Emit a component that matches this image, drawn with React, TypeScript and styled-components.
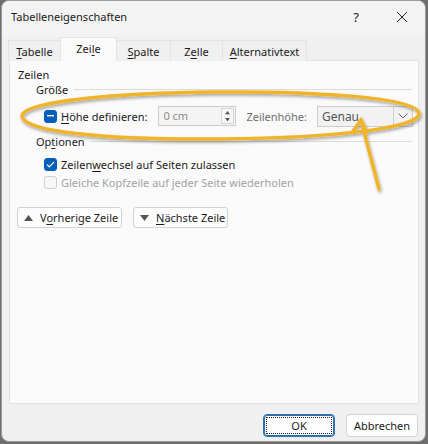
import React from 'react';
import styled, { createGlobalStyle } from 'styled-components';

const GlobalStyle = createGlobalStyle`
  html, body {
    margin: 0;
    padding: 0;
    background: #6e6e6e;
  }
  body {
    font-family: 'Noto Sans', 'Open Sans', sans-serif;
    font-size: 11px;
    color: #1b1b1b;
  }
`;

const Window = styled.div`
  position: relative;
  box-sizing: border-box;
  width: 425px;
  height: 442px;
  margin-left: 1px;
  background: #f0f0f0;
  border: 1px solid #9c9c9c;
  border-radius: 8px;
  overflow: hidden;
  display: flex;
  flex-direction: column;
`;

const TitleBar = styled.div`
  height: 36px;
  display: flex;
  align-items: center;
  padding-left: 9px;
  background: #f3f3f3;
`;

const Title = styled.div`
  flex: 1;
  font-size: 11px;
  margin-top: -5px;
`;

const TitleButton = styled.div`
  width: 46px;
  height: 32px;
  margin-top: -5px;
  display: flex;
  align-items: center;
  justify-content: center;
  font-size: 13px;
  color: #222;
`;

const TabRow = styled.div`
  display: flex;
  align-items: flex-end;
  padding-left: 7px;
  height: 24px;
`;

const Tab = styled.div<{ active?: boolean; w: number }>`
  box-sizing: border-box;
  width: ${({ w }) => w}px;
  height: ${({ active }) => (active ? 24 : 21)}px;
  display: flex;
  align-items: center;
  justify-content: center;
  background: ${({ active }) => (active ? '#fafafa' : '#f0f0f0')};
  border: 1px solid #e3e3e3;
  border-bottom: none;
  margin-left: -1px;
  position: relative;
  z-index: ${({ active }) => (active ? 2 : 1)};
  padding-bottom: ${({ active }) => (active ? 3 : 0)}px;
  white-space: nowrap;
`;

const Key = styled.span`
  text-decoration: underline;
  text-underline-offset: 2px;
`;

const Panel = styled.div`
  position: relative;
  box-sizing: border-box;
  margin: -1px 6px 0 7px;
  height: 344px;
  background: #fafafa;
  border: 1px solid #e3e3e3;
  padding: 6px 0 0 8px;
`;

const SectionLabel = styled.div`
  height: 16px;
  line-height: 16px;
`;

const GroupHeader = styled.div<{ top: number }>`
  display: flex;
  align-items: center;
  gap: 6px;
  margin: ${({ top }) => top}px 6px 0 18px;
  height: 16px;
  &::after {
    content: '';
    flex: 1;
    height: 1px;
    background: #dcdcdc;
  }
`;

const Row = styled.div<{ top: number }>`
  display: flex;
  align-items: center;
  margin: ${({ top }) => top}px 0 0 26px;
  height: 20px;
`;

const Box = styled.span<{ kind: 'mixed' | 'checked' | 'off' }>`
  box-sizing: border-box;
  width: 13px;
  height: 13px;
  border-radius: 3px;
  margin-right: 4px;
  display: flex;
  align-items: center;
  justify-content: center;
  background: ${({ kind }) => (kind === 'off' ? '#f7f7f7' : '#005fb8')};
  border: 1px solid ${({ kind }) => (kind === 'off' ? '#cfcfcf' : '#005fb8')};
`;

const Label = styled.span<{ disabled?: boolean; muted?: boolean; gapLeft?: number }>`
  color: ${({ disabled, muted }) => (disabled ? '#a3a3a3' : muted ? '#6f6f6f' : '#1b1b1b')};
  margin-left: ${({ gapLeft }) => gapLeft ?? 0}px;
  white-space: nowrap;
`;

const SpinField = styled.div`
  box-sizing: border-box;
  margin-left: 11px;
  width: 78px;
  height: 20px;
  display: flex;
  align-items: center;
  padding-right: 1px;
  border: 1px solid #cdcdcd;
  background: #f4f4f4;
`;

const FieldText = styled.div`
  flex: 1;
  padding-left: 4px;
  line-height: 18px;
  color: #8c8c8c;
`;

const Spinner = styled.div`
  box-sizing: border-box;
  width: 13px;
  height: 16px;
  border: 1px solid #d4d4d4;
  display: flex;
  flex-direction: column;
  align-items: center;
  justify-content: center;
  gap: 3px;
  background: #f7f7f7;
`;

const SelectField = styled.div`
  box-sizing: border-box;
  margin-left: 10px;
  width: 96px;
  height: 21px;
  display: flex;
  border: 1px solid #cdcdcd;
  background: #f2f2f2;
`;

const SelectText = styled.div`
  flex: 1;
  padding-left: 4px;
  line-height: 19px;
  font-size: 12px;
  color: #555;
`;

const DropButton = styled.div`
  width: 18px;
  border-left: 1px solid #cdcdcd;
  display: flex;
  align-items: center;
  justify-content: center;
`;

const NavBar = styled.div`
  display: flex;
  gap: 11px;
  margin: 15px 0 0 -1px;
`;

const NavButton = styled.div<{ w: number }>`
  box-sizing: border-box;
  width: ${({ w }) => w}px;
  height: 21px;
  display: flex;
  align-items: center;
  gap: 7px;
  padding-left: 6px;
  background: #fdfdfd;
  border: 1px solid #d2d2d2;
  border-radius: 3px;
  white-space: nowrap;
`;

const Footer = styled.div`
  flex: 1;
  display: flex;
  justify-content: flex-end;
  align-items: flex-start;
  gap: 11px;
  padding: 10px 7px 0 0;
`;

const DialogButton = styled.div<{ primary?: boolean }>`
  box-sizing: border-box;
  width: 72px;
  height: 23px;
  display: flex;
  align-items: center;
  justify-content: center;
  background: #fdfdfd;
  border: 1px solid ${({ primary }) => (primary ? '#2f6fb0' : '#d2d2d2')};
  border-radius: 4px;
  position: relative;
  ${({ primary }) =>
    primary &&
    `
    box-shadow: inset 0 0 0 1px #2f6fb0;
    &::before {
      content: '';
      position: absolute;
      inset: 2px;
      border: 1px dotted #222;
    }
  `}
`;

const Overlay = styled.svg`
  position: absolute;
  left: 0;
  top: 0;
  pointer-events: none;
  z-index: 5;
`;

const Mark = ({ kind }: { kind: 'mixed' | 'checked' | 'off' }) => (
  <Box kind={kind}>
    {kind === 'mixed' && (
      <svg width="7" height="2" viewBox="0 0 7 2">
        <rect width="7" height="1.4" fill="#fff" />
      </svg>
    )}
    {kind === 'checked' && (
      <svg width="9" height="7" viewBox="0 0 9 7">
        <path d="M1 3.6 L3.3 5.8 L8 1" fill="none" stroke="#fff" strokeWidth="1.2" />
      </svg>
    )}
  </Box>
);

const Triangle = ({ up, size = 9 }: { up?: boolean; size?: number }) => (
  <svg width={size} height={(size * 2) / 3} viewBox="0 0 9 6">
    <path d={up ? 'M0 6 L4.5 0 L9 6 Z' : 'M0 0 L4.5 6 L9 0 Z'} fill="#555" />
  </svg>
);

const App = () => (
  <>
    <GlobalStyle />
    <Window>
      <TitleBar>
        <Title>Tabelleneigenschaften</Title>
        <TitleButton>?</TitleButton>
        <TitleButton>
          <svg width="12" height="12" viewBox="0 0 12 12">
            <path d="M1 1 L11 11 M11 1 L1 11" stroke="#222" strokeWidth="1" />
          </svg>
        </TitleButton>
      </TitleBar>
      <TabRow>
        <Tab w={53}>
          <span>
            <Key>T</Key>abelle
          </span>
        </Tab>
        <Tab w={57} active>
          <span>
            Zei<Key>l</Key>e
          </span>
        </Tab>
        <Tab w={55}>
          <span>
            <Key>S</Key>palte
          </span>
        </Tab>
        <Tab w={53}>
          <span>
            Z<Key>e</Key>lle
          </span>
        </Tab>
        <Tab w={85}>
          <span>
            <Key>A</Key>lternativtext
          </span>
        </Tab>
      </TabRow>
      <Panel>
        <SectionLabel>Zeilen</SectionLabel>
        <GroupHeader top={-2}>Größe</GroupHeader>
        <Row top={9}>
          <Mark kind="mixed" />
          <Label>
            <Key>H</Key>öhe definieren:
          </Label>
          <SpinField>
            <FieldText>0 cm</FieldText>
            <Spinner>
              <Triangle up size={5} />
              <Triangle size={5} />
            </Spinner>
          </SpinField>
          <Label muted gapLeft={10}>
            Zeilenhöhe:
          </Label>
          <SelectField>
            <SelectText>Genau</SelectText>
            <DropButton>
              <svg width="10" height="6" viewBox="0 0 10 6">
                <path d="M0.5 0.5 L5 5 L9.5 0.5" fill="none" stroke="#666" strokeWidth="1" />
              </svg>
            </DropButton>
          </SelectField>
        </Row>
        <GroupHeader top={7}>
          <span>
            Op<Key>t</Key>ionen
          </span>
        </GroupHeader>
        <Row top={5}>
          <Mark kind="checked" />
          <Label>
            Zeilen<Key>w</Key>echsel auf Seiten zulassen
          </Label>
        </Row>
        <Row top={-2}>
          <Mark kind="off" />
          <Label disabled>Gleiche Kopfzeile auf jeder Seite wiederholen</Label>
        </Row>
        <NavBar>
          <NavButton w={105}>
            <Triangle up />
            <span>
              V<Key>o</Key>rherige Zeile
            </span>
          </NavButton>
          <NavButton w={95}>
            <Triangle />
            <span>
              <Key>N</Key>ächste Zeile
            </span>
          </NavButton>
        </NavBar>
        <Overlay width="420" height="200" viewBox="0 0 420 200">
          <defs>
            <filter id="sh" x="-10%" y="-30%" width="120%" height="160%">
              <feDropShadow dx="1" dy="2" stdDeviation="1.5" floodColor="#000" floodOpacity="0.35" />
            </filter>
          </defs>
          <g filter="url(#sh)" fill="none" stroke="#efb42c" strokeWidth="3.5" strokeLinecap="round">
            <path d="M205 31 C 300 30, 405 36, 409 52 C 412 66, 330 77, 210 78 C 90 79, 12 70, 12 55 C 12 40, 110 32, 205 31 Z" />
            <path d="M369 128 L351 59" />
            <path d="M343 70 L351 59 L357 71" />
          </g>
        </Overlay>
      </Panel>
      <Footer>
        <DialogButton primary>OK</DialogButton>
        <DialogButton>Abbrechen</DialogButton>
      </Footer>
    </Window>
  </>
);

export default App;
